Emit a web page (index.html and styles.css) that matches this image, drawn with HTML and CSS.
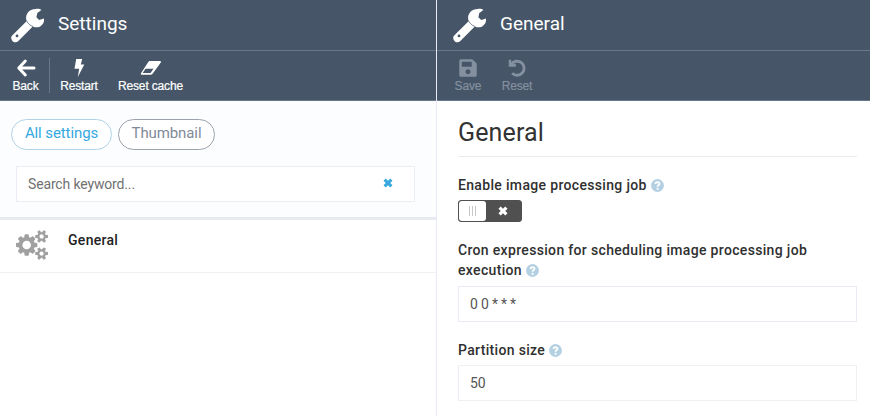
FILE: index.html
```html
<!DOCTYPE html>
<html lang="en">
<head>
<meta charset="utf-8">
<title>Settings</title>
<link rel="stylesheet" href="styles.css">
</head>
<body>
<svg class="defs" width="0" height="0">
  <symbol id="wrench" viewBox="0 0 36 36">
    <path fill-rule="evenodd" d="M25.8 1C28 .6 30.400 1.200 31.400 2L27.300 5.100 26.400 9.300 29.200 12.100 34 10.600C34.600 13.800 33.100 16.700 30.200 18.400C28 19.600 25.300 19.700 22.800 18.500L8.100 33.200C5.900 35.200 2.700 34.300 1.600 31.400C.9 29.800 1.200 28.500 2.200 27.500L16.800 12.900C15.700 10.700 15.800 7.800 17.400 5.200C19.300 2.200 22.400 1.100 25.800 1ZM7 26.500A1.400 1.400 0 1 0 7 29.300A1.400 1.400 0 1 0 7 26.500Z"/>
    <path class="wrench-line" d="M16.700 13C18 15.600 20 17.600 23.200 18.500"/>
  </symbol>
  <symbol id="help" viewBox="0 0 13 13">
    <circle cx="6.500" cy="6.500" r="6.400" fill="#b3d0e2"/>
    <path d="M4.500 5C4.500 2.500 8.500 2.500 8.500 4.800C8.500 6.100 6.600 6.100 6.600 7.700" fill="none" stroke="#fff" stroke-width="1.900"/>
    <circle cx="6.600" cy="9.800" r="1.100" fill="#fff"/>
  </symbol>
  <symbol id="cross" viewBox="0 0 10 10">
    <path d="M1.600 1.600L8.400 8.400M8.400 1.600L1.600 8.400" fill="none" stroke="currentColor" stroke-width="3.200"/>
  </symbol>
</svg>
<div class="app">
  <section class="blade blade-list">
    <header class="blade-head"><svg class="wrench"><use href="#wrench"/></svg><h1>Settings</h1></header>
    <nav class="toolbar">
      <button class="tool back"><svg viewBox="0 0 20 20"><path d="M9.300 3L2.800 10L9.300 17M3.200 10H18" fill="none" stroke="currentColor" stroke-width="3" stroke-linecap="round" stroke-linejoin="round"/></svg><span>Back</span></button>
      <button class="tool restart"><svg viewBox="0 0 20 20"><path d="M7.200 1H13.200L11.800 6.600H15.300L8.800 19L10.200 10.700H5.500Z"/></svg><span>Restart</span></button>
      <button class="tool cache"><svg class="eraser" viewBox="0 0 22 20"><path fill-rule="evenodd" d="M9.600 3H20.200Q21.500 3.200 20.800 4.500L12.600 15.800Q11.900 16.700 10.800 16.700H1.500Q.300 16.400 1 15.200L8.300 4Q8.800 3 9.600 3ZM5.500 10.800L2.700 15.100H10.500L13.500 10.800Z"/></svg><span>Reset cache</span></button>
    </nav>
    <div class="filters">
      <div class="chips"><button class="chip active">All settings</button><button class="chip thumb">Thumbnail</button></div>
      <div class="search"><span>Search keyword...</span><svg><use href="#cross"/></svg></div>
    </div>
    <div class="row">
      <svg class="cogs" viewBox="0 0 1920 1792"><path d="M896 896q0-106-75-181t-181-75-181 75-75 181 75 181 181 75 181-75 75-181zm768 512q0-52-38-90t-90-38-90 38-38 90q0 53 37.500 90.500t90.500 37.500 90.500-37.500 37.500-90.500zm0-1024q0-52-38-90t-90-38-90 38-38 90q0 53 37.500 90.500t90.500 37.500 90.500-37.500 37.500-90.500zm-384 421v185q0 10-7 19.500t-16 10.500l-155 24q-11 35-32 76 34 48 90 115 7 11 7 20 0 12-7 19-23 30-82.500 89.500t-78.500 59.500q-11 0-21-7l-115-90q-37 19-77 31-11 108-23 155-7 24-30 24h-186q-11 0-20-7.500t-10-17.500l-23-153q-34-10-75-31l-118 89q-7 7-20 7-11 0-21-8-144-133-144-160 0-9 7-19 10-14 41-53t47-61q-23-44-35-82l-152-24q-10-1-17-9.500t-7-19.500v-185q0-10 7-19.500t16-10.500l155-24q11-35 32-76-34-48-90-115-7-11-7-20 0-12 7-20 22-30 82-89t79-59q11 0 21 7l115 90q34-18 77-32 11-108 23-154 7-24 30-24h186q11 0 20 7.500t10 17.500l23 153q34 10 75 31l118-89q8-7 20-7 11 0 21 8 144 133 144 160 0 8-7 19-12 16-42 54t-45 60q23 48 34 82l152 23q10 2 17 10.500t7 19.500zm640 533v140q0 16-149 31-12 27-30 52 51 113 51 138 0 4-4 7-122 71-124 71-8 0-46-47t-52-68q-20 2-30 2t-30-2q-14 21-52 68t-46 47q-2 0-124-71-4-3-4-7 0-25 51-138-18-25-30-52-149-15-149-31v-140q0-16 149-31 13-29 30-52-51-113-51-138 0-4 4-7 4-2 35-20t59-34 30-16q8 0 46 46.500t52 67.500q20-2 30-2t30 2q51-71 92-112l6-2q4 0 124 70 4 3 4 7 0 25-51 138 17 23 30 52 149 15 149 31zm0-1024v140q0 16-149 31-12 27-30 52 51 113 51 138 0 4-4 7-122 71-124 71-8 0-46-47t-52-68q-20 2-30 2t-30-2q-14 21-52 68t-46 47q-2 0-124-71-4-3-4-7 0-25 51-138-18-25-30-52-149-15-149-31v-140q0-16 149-31 13-29 30-52-51-113-51-138 0-4 4-7 4-2 35-20t59-34 30-16q8 0 46 46.500t52 67.500q20-2 30-2t30 2q51-71 92-112l6-2q4 0 124 70 4 3 4 7 0 25-51 138 17 23 30 52 149 15 149 31z"/></svg>
      <span>General</span>
    </div>
  </section>
  <section class="blade blade-detail">
    <header class="blade-head"><svg class="wrench"><use href="#wrench"/></svg><h1>General</h1></header>
    <nav class="toolbar muted">
      <button class="tool save"><svg viewBox="-32 0 512 512"><path d="M433.941 129.941l-83.882-83.882A48 48 0 0 0 316.118 32H48C21.490 32 0 53.490 0 80v352c0 26.510 21.490 48 48 48h352c26.510 0 48-21.490 48-48V163.882a48 48 0 0 0-14.059-33.941zM224 416c-35.346 0-64-28.654-64-64 0-35.346 28.654-64 64-64s64 28.654 64 64c0 35.346-28.654 64-64 64zm96-304.520V212c0 6.627-5.373 12-12 12H76c-6.627 0-12-5.373-12-12V108c0-6.627 5.373-12 12-12h228.520c3.183 0 6.235 1.264 8.485 3.515l3.480 3.480A11.996 11.996 0 0 1 320 111.480z"/></svg><span>Save</span></button>
      <button class="tool reset"><svg viewBox="0 0 20 20"><path d="M4.300 6.300A7 7 0 1 1 5.200 15.200" fill="none" stroke="currentColor" stroke-width="2.900"/><path d="M1.700 1.800H4.200V5.800H8.800V8.700H1.700Z"/></svg><span>Reset</span></button>
    </nav>
    <form class="content">
      <h2>General</h2>
      <div class="label">Enable image processing job <svg><use href="#help"/></svg></div>
      <div class="switch"><span class="knob"><i></i><i></i><i></i></span><svg><use href="#cross"/></svg></div>
      <div class="label cron">Cron expression for scheduling image processing job execution <svg><use href="#help"/></svg></div>
      <div class="input">0 0 * * *</div>
      <div class="label size">Partition size <svg><use href="#help"/></svg></div>
      <div class="input soft">50</div>
    </form>
  </section>
</div>
</body>
</html>
```
FILE: styles.css
```css
* { box-sizing: border-box; }
body { margin: 0; background: #fff; color: #333; font-family: Roboto, sans-serif; overflow: hidden; }
svg { display: block; fill: currentColor; flex: none; }
button { background: none; border: 0; padding: 0; margin: 0; color: inherit; }
h1, h2 { margin: 0; }
.defs { position: absolute; }
.app { display: grid; grid-template-columns: 437px 433px; height: 416px; }
.blade-list { border-right: 1px solid #e8eaf5; }
.blade-head { height: 50px; padding-left: 10px; display: flex; background: #465668; color: #fff; }
.blade-detail .blade-head { padding-left: 15px; }
.blade-head h1 { font-size: 19px; font-weight: 400; line-height: 24px; margin: 12px 0 0 12px; }
.wrench { width: 36px; height: 36px; margin-top: 8px; }
.wrench-line { fill: none; stroke: #465668; stroke-width: .7; }
.toolbar { height: 51px; border-top: 1px solid #66788a; border-bottom: 1px solid #66788a; background: #465668; color: #fff; display: flex; }
.tool { display: flex; flex-direction: column; align-items: center; padding-top: 7px; font: 12px/14px "Liberation Sans", Arial, sans-serif; letter-spacing: -.15px; -webkit-text-stroke: .2px currentColor; white-space: nowrap; }
.tool svg { width: 20px; height: 20px; }
.tool .eraser { width: 22px; }
.tool span { margin-top: 1px; }
.back { width: 50px; height: 35px; margin-top: 7px; padding: 0 0 0 2px; border-right: 1px solid #66788a; }
.restart { width: 58px; }
.cache { width: 85px; }
.muted { color: #84909f; }
.save { margin-left: 17px; width: 28px; }
.reset { margin-left: 19px; width: 32px; }
.filters { height: 119px; border-bottom: 3px solid #e8eaf2; background: #fbfdff; padding: 18px 21px 0 11px; }
.chips { display: flex; gap: 6px; }
.chip { height: 31px; width: 101px; border: 1px solid #b0d3e8; border-radius: 16px; background: #fff; padding-bottom: 2px; font: 15px/27px Roboto, sans-serif; letter-spacing: -.1px; color: #35a8e0; white-space: nowrap; }
.thumb { width: 97px; border-color: #9ba2ad; color: #7f8b99; }
.search { margin: 16px 0 0 5px; height: 36px; width: 399px; border: 1px solid #ebedf4; background: #fff; padding: 0 21px 0 11px; display: flex; align-items: center; justify-content: space-between; font-size: 14px; letter-spacing: -.15px; color: #717171; }
.search svg { width: 10px; height: 10px; margin-top: -2px; color: #39a9df; }
.row { height: 53px; border-bottom: 1px solid #f1f2f4; display: flex; padding-left: 16px; }
.cogs { width: 32px; height: 30px; margin-top: 10px; color: #a0a0a0; }
.row span { margin: 10px 0 0 20px; font-size: 14px; line-height: 20px; font-weight: 500; letter-spacing: .3px; color: #222; }
.content { padding: 17px 13px 0 21px; }
.content h2 { height: 39px; border-bottom: 1px solid #e9edf2; font-size: 25px; line-height: 30px; font-weight: 400; letter-spacing: .15px; }
.label { margin-top: 18px; font-size: 14px; line-height: 20px; font-weight: 500; letter-spacing: .33px; color: #303030; }
.label svg { display: inline-block; width: 13px; height: 13px; vertical-align: -2px; }
.switch { width: 64px; height: 22px; margin-top: 5px; border: 1px solid #505050; border-radius: 3px; background: #505050; display: flex; align-items: center; }
.knob { width: 27px; height: 20px; background: #fff; border-radius: 3px; display: flex; align-items: center; justify-content: center; gap: 2px; margin-right: 12px; }
.knob i { width: 1px; height: 10px; background: #c8c8c8; }
.switch svg { width: 10px; height: 10px; color: #fff; }
.input { height: 36px; margin-top: 6px; border: 1px solid #e9ebf5; padding-left: 11px; font-size: 14px; line-height: 35px; letter-spacing: -.2px; color: #555; }
.soft { margin-top: 5px; border-color: #f0f0f2; border-left-color: #e9ebf5; }
```
